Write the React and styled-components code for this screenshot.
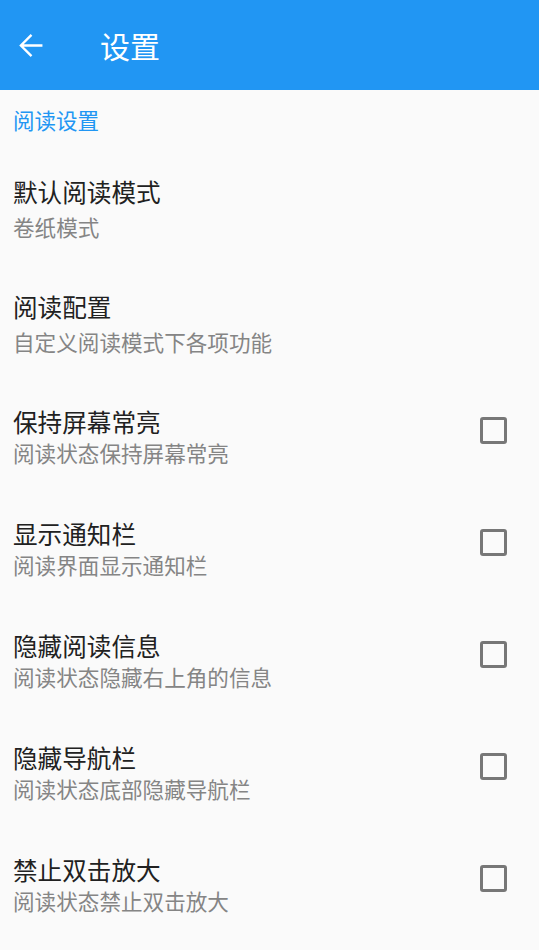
import styled, { createGlobalStyle } from "styled-components"

const GlobalStyle = createGlobalStyle`
    html, body {
        margin: 0;
        padding: 0;
        background: #fafafa;
    }
    body {
        font-family: "Noto Sans", "Noto Sans CJK SC", sans-serif;
    }
`

const Page = styled.div`
    width: 539px;
    min-height: 950px;
    background: #fafafa;
`

const Toolbar = styled.header`
    height: 90px;
    background-color: #2196f3;
    display: flex;
    align-items: center;
    color: #fff;
`

const BackButton = styled.button`
    width: 62px;
    height: 90px;
    padding: 0 0 0 19px;
    border: none;
    background: transparent;
    display: flex;
    align-items: center;
    cursor: pointer;
`

const Title = styled.h1`
    margin: 0 0 0 38px;
    font-size: 30px;
    font-weight: 400;
    line-height: 40px;
    padding-top: 3px;
`

const SectionTitle = styled.div`
    height: 62px;
    display: flex;
    align-items: center;
    padding: 0 0 4px 13px;
    box-sizing: border-box;
    font-size: 21.5px;
    color: #2196f3;
`

const Row = styled.div`
    height: ${p => p.$height}px;
    display: flex;
    align-items: center;
    padding: 0 32px 0 13px;
`

const Texts = styled.div`
    flex: 1;
    display: flex;
    flex-direction: column;
`

const ItemTitle = styled.div`
    font-size: 24.6px;
    color: #212121;
    line-height: ${p => p.$line}px;
`

const Summary = styled.div`
    font-size: 21.6px;
    color: #858585;
    line-height: ${p => p.$line}px;
`

const CheckBox = styled.span`
    width: 21px;
    height: 21px;
    border: 3px solid #777;
    border-radius: 3px;
    margin-bottom: 16px;
`

const BackArrow = () => (
    <svg width="25" height="25" viewBox="0 0 16 16" fill="none" stroke="#fff" strokeWidth="1.5">
        <path d="M15 8H1.5M8 1.2L1.2 8 8 14.8" />
    </svg>
)

const items = [
    { title: "默认阅读模式", summary: "卷纸模式" },
    { title: "阅读配置", summary: "自定义阅读模式下各项功能" },
    { title: "保持屏幕常亮", summary: "阅读状态保持屏幕常亮", check: true },
    { title: "显示通知栏", summary: "阅读界面显示通知栏", check: true },
    { title: "隐藏阅读信息", summary: "阅读状态隐藏右上角的信息", check: true },
    { title: "隐藏导航栏", summary: "阅读状态底部隐藏导航栏", check: true },
    { title: "禁止双击放大", summary: "阅读状态禁止双击放大", check: true },
]

const App = () => {
    return (
        <Page>
            <GlobalStyle />
            <Toolbar>
                <BackButton><BackArrow /></BackButton>
                <Title>设置</Title>
            </Toolbar>
            <SectionTitle>阅读设置</SectionTitle>
            {items.map(item => (
                <Row key={item.title} $height={item.check ? 112 : 115}>
                    <Texts>
                        <ItemTitle $line={item.check ? 31 : 35}>{item.title}</ItemTitle>
                        <Summary $line={item.check ? 31 : 35}>{item.summary}</Summary>
                    </Texts>
                    {item.check && <CheckBox />}
                </Row>
            ))}
        </Page>
    )
}

export default App
